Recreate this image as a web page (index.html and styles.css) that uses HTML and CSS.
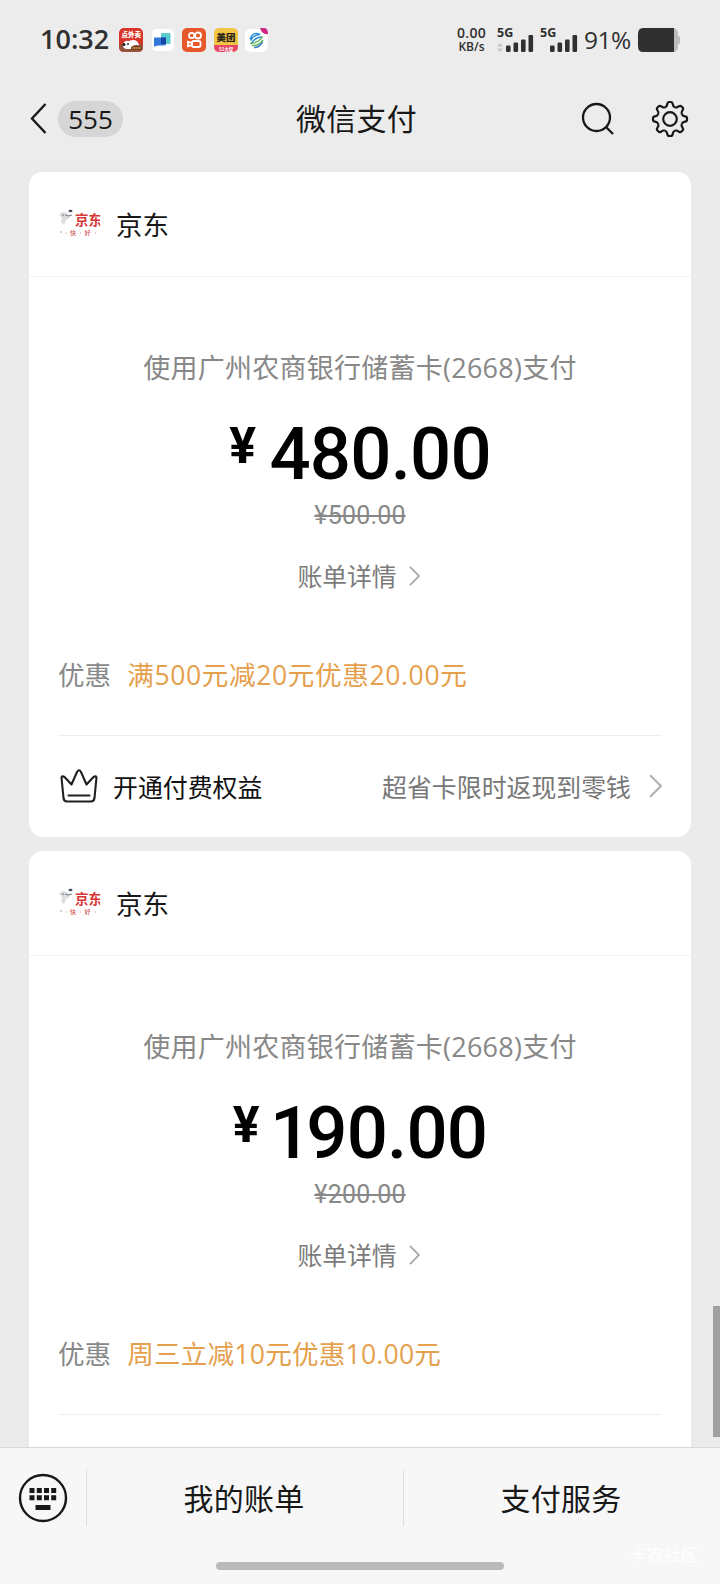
FILE: index.html
```html
<!DOCTYPE html>
<html lang="zh-CN">
<head>
<meta charset="utf-8">
<title>微信支付</title>
<link rel="stylesheet" href="styles.css">
</head>
<body>
<svg class="defs" aria-hidden="true">
  <symbol id="chevron" viewBox="0 0 12 22"><path d="M1 1L11 11L1 21" fill="none" stroke="currentColor" stroke-width="2"/></symbol>
  <symbol id="jd" viewBox="0 0 44 32">
    <path d="M1 8Q5 3 8 6L12 8Q13 11 8 13L6 18L3 15L4 11Z" fill="#dcdde0"/>
    <path d="M4 7L6 9M7 8Q10 10 14 8" stroke="#777a83" fill="none"/>
    <ellipse cx="12.500" cy="4" rx="2" ry="1.200" fill="#444b5a"/>
    <text x="17" y="18" class="jd-main">京东</text>
    <path d="M42.200 0H44V32H42.200Z" fill="#fff"/>
    <text x="12" y="28" class="jd-sub">快</text><text x="26.500" y="28" class="jd-sub">好</text>
    <path d="M2 25h2M8 26h1M22 26h1M37 26h1" stroke="#c99" fill="none"/>
  </symbol>
  <symbol id="signal" viewBox="0 0 28 17">
    <g fill="#303030"><rect x="0" y="10.500" width="4.600" height="6.500" rx="1.200"/><rect x="7.500" y="7.500" width="4.600" height="9.500" rx="1.200"/><rect x="15" y="4.500" width="4.600" height="12.500" rx="1.200"/><rect x="22.500" y="0" width="4.600" height="17" rx="1.200"/></g>
  </symbol>
</svg>
<div class="screen">
  <div class="status">
    <span class="time">10:32</span>
    <div class="apps">
      <svg viewBox="0 0 24 24"><rect width="24" height="24" rx="5" fill="#d93429"/><path d="M0 17Q12 11 24 17V19Q24 24 19 24H5Q0 24 0 19Z" fill="#97543a"/><text x="2.500" y="9" class="app-a">点外卖</text><path d="M4 17Q5 12 10 13Q18 10 20 17Q21 21 15 21H8Q4 21 4 17Z" fill="#fff"/><circle cx="9" cy="16" r="1" fill="#222"/><circle cx="5" cy="16.500" r="1.500" fill="#222"/><path d="M12 19Q17 15 23 19V22H12Z" fill="#754027"/><path d="M13 20H22" stroke="#e9a150"/></svg>
      <svg viewBox="0 0 24 24"><rect x="1" y="1" width="22" height="22" rx="5" fill="#fff"/><rect x="10" y="5" width="9.500" height="11" rx="1" fill="#5bcbd0"/><path d="M4 9.500H15V16Q15 17.500 13.500 17.500H7L3 18.500V10.500Q3 9.500 4 9.500Z" fill="#3277dc"/><rect x="10" y="9.500" width="5" height="6.500" fill="#1746a5"/></svg>
      <svg viewBox="0 0 24 24"><rect width="24" height="24" rx="5" fill="#e5592b"/><g fill="none" stroke="#fff" stroke-width="1.800"><circle cx="9.700" cy="7.500" r="2.700"/><circle cx="16" cy="7.500" r="3"/><rect x="10" y="13" width="8.500" height="6" rx="1.800"/><path d="M10 15L6 13.800V18.200L10 17"/></g></svg>
      <svg viewBox="0 0 24 24"><clipPath id="mt"><rect width="24" height="24" rx="5"/></clipPath><g clip-path="url(#mt)"><rect width="24" height="24" fill="#f3c544"/><path d="M0 17H24V24H0Z" fill="#e84767"/><text x="2.500" y="13" class="app-m">美团</text><text x="5" y="22.500" class="app-s">51大促</text></g></svg>
      <svg viewBox="0 0 24 24"><rect x="0" y="1" width="22.500" height="23" rx="5" fill="#fff"/><g fill="none" stroke-width="1.500"><path d="M5 11Q8 3 15 6.500Q9 6.500 5.500 12.500" stroke="#308fd0"/><path d="M17 9Q11 8 6 16" stroke="#308fd0"/><path d="M17.500 8.500Q14 15 5 15.500" stroke="#62b65b"/><path d="M18 12Q14 18 7 17.500" stroke="#62b65b"/><path d="M17.500 14Q14 20 9 19.500" stroke="#4384cc"/></g><path d="M15 0H20Q23 1 23 6Q17 7 15 0Z" fill="#cf2885"/></svg>
    </div>
    <div class="net"><span class="rate">0.00</span><span>KB/s</span></div>
    <div class="cell"><span class="g">5G</span><div class="bars"><svg class="updown" viewBox="0 0 6 9"><path d="M3 0L6 3.500H0ZM3 9L0 5.500H6Z" fill="#c3c3c3"/></svg><svg class="sig"><use href="#signal"/></svg></div></div>
    <div class="cell second"><span class="g">5G</span><div class="bars"><svg class="sig"><use href="#signal"/></svg></div></div>
    <span class="pct">91%</span>
    <svg class="battery" viewBox="0 0 42 24"><path d="M34 0H35Q40 0 40 6V8H41Q42 9 42 12T41 16H40V18Q40 24 35 24H34Z" fill="#bdbdbd"/><path d="M5 0H36V24H5Q0 24 0 18V6Q0 0 5 0Z" fill="#303030"/></svg>
  </div>

  <header class="header">
    <div class="left">
      <svg class="back" viewBox="0 0 17 31"><path d="M15.500 1L2 15.500L15.500 30" fill="none" stroke="#181818" stroke-width="2.400"/></svg>
      <span class="pill">555</span>
    </div>
    <h1 class="title">微信支付</h1>
    <div class="right">
      <svg class="search" viewBox="0 0 34 34"><circle cx="15.500" cy="15.500" r="13.500"/><path d="M25 25L32 32"/></svg>
      <svg class="gear" viewBox="-19 -19 38 38">
        <defs><path id="tooth" d="M-4.900 -11.800C-3.200 -12.400 -2.900 -13.500 -2.700 -15Q-2.400 -17 -.8 -17H.8Q2.400 -17 2.700 -15C2.900 -13.500 3.200 -12.400 4.900 -11.800"/></defs>
        <use href="#tooth"/><use href="#tooth" transform="rotate(45)"/><use href="#tooth" transform="rotate(90)"/><use href="#tooth" transform="rotate(135)"/><use href="#tooth" transform="rotate(180)"/><use href="#tooth" transform="rotate(225)"/><use href="#tooth" transform="rotate(270)"/><use href="#tooth" transform="rotate(315)"/><circle r="6.800"/>
      </svg>
    </div>
  </header>

  <main class="feed">
    <section class="card">
      <div class="merchant"><svg class="jd"><use href="#jd"/></svg><span>京东</span></div>
      <div class="pay">
        <p class="method">使用广州农商银行储蓄卡(2668)支付</p>
        <p class="amount"><span class="yen">¥</span><span class="num">480.00</span></p>
        <p class="origin">¥500.00</p>
        <p class="detail"><span>账单详情</span><svg><use href="#chevron"/></svg></p>
      </div>
      <div class="promo"><span>优惠</span><span class="deal wide">满500元减20元优惠20.00元</span></div>
      <div class="perk">
        <svg class="crown" viewBox="0 0 38 34"><path d="M1.500 8.500Q2 6.500 4.500 8L11.500 15.500L17 3Q19 -.5 21 3L26.500 15.500L33.500 8Q36 6.500 36.500 8.500L34.500 29Q34 32.500 31 32.500H7Q4 32.500 3.500 29ZM8.500 26.500H29.500"/></svg>
        <span class="perk-name">开通付费权益</span><span class="perk-note">超省卡限时返现到零钱</span>
        <svg class="go"><use href="#chevron"/></svg>
      </div>
    </section>
    <section class="card">
      <div class="merchant"><svg class="jd"><use href="#jd"/></svg><span>京东</span></div>
      <div class="pay">
        <p class="method">使用广州农商银行储蓄卡(2668)支付</p>
        <p class="amount"><span class="yen">¥</span><span class="num"><span class="one">1</span>90.00</span></p>
        <p class="origin">¥200.00</p>
        <p class="detail"><span>账单详情</span><svg><use href="#chevron"/></svg></p>
      </div>
      <div class="promo"><span>优惠</span><span class="deal">周三立减10元优惠10.00元</span></div>
      <div class="perk"></div>
    </section>
    <div class="scrollbar"></div>
  </main>

  <footer class="footer">
    <nav class="menu">
      <div class="key"><svg viewBox="0 0 50 50"><circle cx="25" cy="25" r="23" fill="none" stroke="#181818" stroke-width="2.400"/><path d="M11.500 15h5v5h-5zM18.800 15h5v5h-5zM26 15h5v5h-5zM33.200 15h5v5h-5zM11.500 22.300h5v5h-5zM18.800 22.300h5v5h-5zM26 22.300h5v5h-5zM33.200 22.300h5v5h-5zM17.500 32h15v5h-15z" fill="#181818"/></svg></div>
      <div class="tab">我的账单</div>
      <div class="tab">支付服务</div>
    </nav>
    <div class="home"></div>
    <span class="mark">卡农社区</span>
  </footer>
</div>
</body>
</html>
```
FILE: styles.css
```css
* { box-sizing: border-box; }
body { margin: 0; font-family: "Open Sans", "Noto Sans CJK SC", sans-serif; color: #181818; }
h1, p { margin: 0; font-weight: 400; }
svg { display: block; flex: none; }
.defs { position: absolute; width: 0; height: 0; }
.screen { width: 720px; height: 1584px; display: flex; flex-direction: column; background: #ececec; overflow: hidden; white-space: nowrap; }

.status { height: 80px; flex: none; display: flex; align-items: center; padding: 0 40px; color: #303030; }
.time { width: 79px; font-size: 27px; font-weight: 600; line-height: 40px; padding-bottom: 2px; }
.apps { display: flex; gap: 7.500px; }
.apps svg { width: 24px; height: 24px; }
.app-a { font: 900 6.500px "Noto Sans CJK SC", sans-serif; fill: #fff; }
.app-m { font: 900 9.500px "Noto Sans CJK SC", sans-serif; fill: #2b2518; }
.app-s { font: 700 4.500px "Noto Sans CJK SC", sans-serif; fill: #fff; }
.net { margin-left: auto; width: 33px; display: flex; flex-direction: column; align-items: center; font-weight: 600; font-size: 12px; line-height: 14px; }
.rate { font-size: 14px; letter-spacing: .3px; }
.cell { width: 37px; margin-left: 9px; display: flex; flex-direction: column; height: 24px; }
.cell.second { margin-left: 6px; width: 38px; }
.g { font-size: 12.500px; line-height: 10px; font-weight: 700; height: 7px; }
.bars { display: flex; justify-content: flex-end; align-items: flex-end; gap: 3px; }
.updown { width: 6px; height: 9px; }
.sig { width: 28px; height: 17px; }
.pct { margin-left: 6px; width: 54px; font-size: 24.500px; font-weight: 500; letter-spacing: -.5px; line-height: 36px; padding-bottom: 1px; }
.battery { width: 42px; height: 24px; }

.header { height: 84px; flex: none; display: grid; grid-template-columns: 1fr auto 1fr; align-items: center; padding: 0 31px 6px 30px; border-bottom: 1px solid #e8e8e8; }
.left { display: flex; align-items: center; gap: 11px; }
.back { width: 17px; height: 31px; }
.pill { width: 65px; height: 36px; border-radius: 18px; background: #d6d6d6; text-align: center; font-size: 26px; line-height: 36px; }
.title { font-size: 30px; line-height: 40px; letter-spacing: .2px; margin-left: -6px; }
.right { display: flex; justify-content: flex-end; align-items: center; gap: 36px; }
.search { width: 34px; height: 34px; fill: none; stroke: #181818; stroke-width: 2.300; }
.gear { width: 38px; height: 38px; fill: none; stroke: #181818; stroke-width: 2.200; }

.feed { position: relative; flex: 1; min-height: 0; overflow: hidden; padding: 8px 29px 0; display: flex; flex-direction: column; gap: 14px; background: #ebebeb; }
.card { height: 665px; flex: none; display: flex; flex-direction: column; background: #fff; border-radius: 14px; padding: 0 29px; }
.merchant { height: 105px; flex: none; margin: 0 -29px; padding: 0 29px 2px; display: flex; align-items: center; gap: 14px; border-bottom: 1px solid #f2f2f2; font-size: 26.500px; }
.jd { width: 44px; height: 32px; }
.jd-main { font: 700 13.500px "Noto Sans CJK SC", sans-serif; fill: #d83434; }
.jd-sub { font: 500 6px "Noto Sans CJK SC", sans-serif; fill: #cf5959; }
.pay { height: 351px; flex: none; display: flex; flex-direction: column; align-items: center; color: #888; }
.method { margin-top: 71px; font-size: 27px; line-height: 40px; letter-spacing: .25px; }
.amount { display: flex; align-items: flex-start; gap: 13.500px; height: 73px; margin-top: 30px; color: #000; font-family: Roboto, sans-serif; font-weight: 500; line-height: 73px; }
.yen { font-size: 50px; font-weight: 700; line-height: 56px; }
.num { font-size: 72.500px; letter-spacing: -.8px; }
.one { margin-left: -3px; letter-spacing: -5px; }
.origin { margin-top: 10px; font-family: Roboto, sans-serif; font-size: 25px; line-height: 30px; letter-spacing: .2px; text-decoration: line-through; text-decoration-thickness: 1.500px; }
.detail { display: flex; align-items: center; gap: 12px; margin: 27px 3px 0 0; font-size: 24.800px; line-height: 36px; color: #7b7b7b; }
.detail svg { width: 11px; height: 20px; color: #aaa; }
.promo { height: 108px; flex: none; display: flex; gap: 16px; padding-top: 27px; font-size: 26.600px; line-height: 40px; color: #888; border-bottom: 1px solid #eee; }
.deal { color: #e5a04d; letter-spacing: .2px; }
.wide { letter-spacing: .6px; }
.perk { flex: 1; display: flex; align-items: center; padding: 0 0 2px 2px; font-size: 24.900px; }
.crown { width: 38px; height: 34px; fill: none; stroke: #202020; stroke-width: 2.100; stroke-linejoin: round; stroke-linecap: round; }
.perk-name { margin-left: 15px; color: #111; }
.perk-note { margin-left: auto; margin-right: 18px; color: #777; }
.go { width: 13px; height: 24px; color: #b2b2b2; }
.scrollbar { position: absolute; right: 0; top: 1142px; width: 7px; height: 131px; background: #a0a0a0; }

.footer { position: relative; height: 137px; flex: none; background: #f7f7f7; border-top: 1px solid #d8d8d8; display: flex; flex-direction: column; }
.menu { display: flex; height: 57px; margin-top: 21px; }
.key { width: 86px; display: flex; justify-content: center; align-items: center; }
.key svg { width: 50px; height: 50px; }
.tab { flex: 1; border-left: 1px solid #dedede; text-align: center; font-size: 30px; line-height: 59px; letter-spacing: .2px; padding-right: 2px; }
.home { width: 288px; height: 8px; border-radius: 4px; background: #bababa; margin: 36px auto 0; }
.mark { position: absolute; right: 22px; top: 93px; font-size: 17px; color: #fff; }
```
